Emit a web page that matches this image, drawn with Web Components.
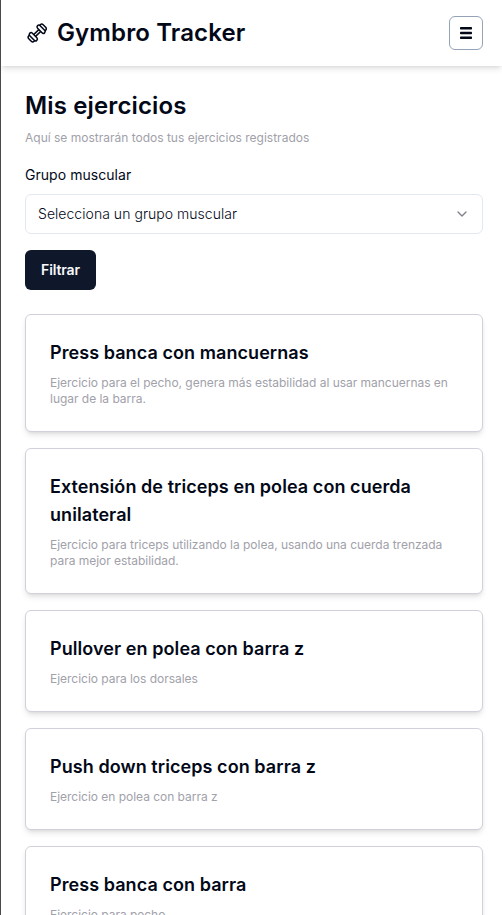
<!DOCTYPE html>
<html lang="es">
<head>
<meta charset="utf-8">
<title>Gymbro Tracker</title>
<style>
html, body { margin: 0; height: 100%; }
body { overflow: hidden; background: #fff; color: #020817; font-family: Inter, "Liberation Sans", sans-serif; }
</style>
</head>
<body>
<gym-app></gym-app>
<script>
const define = (name, html) => customElements.define(name, class extends HTMLElement {
  constructor() {
    super();
    const t = document.createElement('template');
    t.innerHTML = html;
    this.attachShadow({ mode: 'open' }).append(t.content.cloneNode(true));
  }
});

define('dumbbell-icon', `
<style>:host{display:block;width:20px;height:20px}svg{display:block}</style>
<svg width="20" height="20" viewBox="-10.2 -10 20 20" fill="#fff" stroke="#020817" stroke-width="1.5">
  <g transform="rotate(-44)">
    <rect x="-10" y="-3.8" width="4.4" height="7.6" rx="2"/>
    <rect x="5.6" y="-3.8" width="4.4" height="7.6" rx="2"/>
    <rect x="-4.2" y="-1.3" width="8.4" height="2.6"/>
    <rect x="-7.2" y="-5" width="3.6" height="10" rx="1.8"/>
    <rect x="3.6" y="-5" width="3.6" height="10" rx="1.8"/>
  </g>
</svg>`);

define('menu-button', `
<style>
:host{display:block}
button{display:flex;align-items:center;justify-content:center;box-sizing:border-box;width:34px;height:34px;padding:0;border:1px solid #94a3b8;border-radius:6px;background:#fff}
</style>
<button aria-label="Menu"><svg width="12" height="12" viewBox="0 0 12 12" fill="#020817"><rect width="12" height="2.4" rx=".7"/><rect y="4.8" width="12" height="2.4" rx=".7"/><rect y="9.6" width="12" height="2.4" rx=".7"/></svg></button>`);

define('app-header', `
<style>
:host{display:block}
header{display:flex;align-items:center;justify-content:space-between;box-sizing:border-box;height:66px;padding:16px 19px 16px 24px;background:#fff;box-shadow:0 4px 6px -1px rgb(0 0 0/.1),0 2px 4px -2px rgb(0 0 0/.1)}
div{display:flex;align-items:center;gap:10px;padding-left:2px}
h1{margin:0 0 1px;font-size:24px;line-height:32px;font-weight:600;letter-spacing:.12px}
</style>
<header><div><dumbbell-icon></dumbbell-icon><h1><slot></slot></h1></div><menu-button></menu-button></header>`);

define('select-field', `
<style>
:host{display:block}
label{display:block;font-size:14px;line-height:20px;margin-bottom:9px;letter-spacing:.04px}
.box{display:flex;align-items:center;justify-content:space-between;box-sizing:border-box;height:40px;padding:0 12px;border:1px solid #e2e8f0;border-radius:6px;font-size:14px;line-height:20px;font-weight:300;letter-spacing:.04px}
</style>
<label><slot name="label"></slot></label>
<div class="box"><span><slot></slot></span><svg width="16" height="16" viewBox="0 0 24 24" fill="none" stroke="#020817" stroke-width="2" stroke-linecap="round" stroke-linejoin="round" opacity=".5"><path d="m6 9 6 6 6-6"/></svg></div>`);

define('primary-button', `
<style>
:host{display:block;width:max-content}
button{display:block;box-sizing:border-box;height:40px;width:71px;padding:0 16px;border:0;border-radius:6px;background:#0f172a;color:#f8fafc;font:600 14px/20px Inter,"Liberation Sans",sans-serif;letter-spacing:-.12px;white-space:nowrap}
</style>
<button><slot></slot></button>`);

define('exercise-card', `
<style>
:host{display:block;box-sizing:border-box;padding:24px;border:1px solid #d1d1db;border-radius:6px;background:#fff;box-shadow:0 4px 6px -1px rgb(0 0 0/.1),0 2px 4px -2px rgb(0 0 0/.1)}
h2{margin:0 0 8px;font-size:18px;line-height:28px;font-weight:600;letter-spacing:.07px}
p{margin:0;font-size:12px;line-height:16px;color:#a1a1aa;letter-spacing:-.025px}
</style>
<h2><slot name="title"></slot></h2><p><slot></slot></p>`);

define('gym-app', `
<style>
:host{display:block;box-sizing:border-box;height:100%;overflow:hidden;border-left:1px solid #4b4b4f}
main{padding:24px 19px 0 24px}
h2{margin:0 0 8px;font-size:24px;line-height:32px;font-weight:600;letter-spacing:.14px}
.sub{margin:0 0 19px;font-size:12px;line-height:16px;color:#a1a1aa}
primary-button{margin:16px 0 24px}
.list{display:flex;flex-direction:column;gap:16px}
</style>
<app-header>Gymbro Tracker</app-header>
<main>
<h2>Mis ejercicios</h2>
<p class="sub">Aquí se mostrarán todos tus ejercicios registrados</p>
<select-field><span slot="label">Grupo muscular</span>Selecciona un grupo muscular</select-field>
<primary-button>Filtrar</primary-button>
<div class="list">
<exercise-card><span slot="title">Press banca con mancuernas</span>Ejercicio para el pecho, genera más estabilidad al usar mancuernas en lugar de la barra.</exercise-card>
<exercise-card><span slot="title">Extensión de triceps en polea con cuerda unilateral</span>Ejercicio para triceps utilizando la polea, usando una cuerda trenzada para mejor estabilidad.</exercise-card>
<exercise-card><span slot="title">Pullover en polea con barra z</span>Ejercicio para los dorsales</exercise-card>
<exercise-card><span slot="title">Push down triceps con barra z</span>Ejercicio en polea con barra z</exercise-card>
<exercise-card><span slot="title">Press banca con barra</span>Ejercicio para pecho</exercise-card>
</div>
</main>`);
</script>
</body>
</html>
